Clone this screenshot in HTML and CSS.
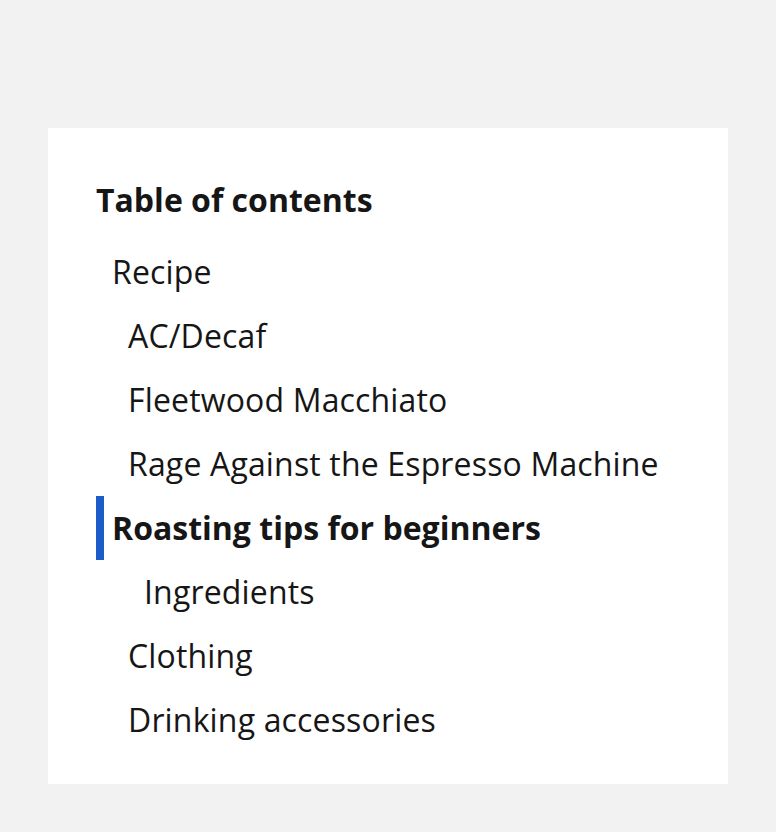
FILE: index.html
```html
<!DOCTYPE html>
<html lang="en">
<head>
<meta charset="utf-8">
<title>Table of contents</title>
<link rel="stylesheet" href="styles.css">
</head>
<body>
<main class="page">
  <nav class="toc">
    <h2 class="toc-title">Table of contents</h2>
    <ul class="toc-list">
      <li class="toc-item lvl1">Recipe</li>
      <li class="toc-item lvl2">AC/Decaf</li>
      <li class="toc-item lvl2">Fleetwood Macchiato</li>
      <li class="toc-item lvl2">Rage Against the Espresso Machine</li>
      <li class="toc-item lvl1 active">Roasting tips for beginners</li>
      <li class="toc-item lvl3">Ingredients</li>
      <li class="toc-item lvl2">Clothing</li>
      <li class="toc-item lvl2">Drinking accessories</li>
    </ul>
  </nav>
</main>
</body>
</html>
```
FILE: styles.css
```css
html, body {
  margin: 0;
  padding: 0;
  background: #f2f2f2;
}
body {
  font-family: "Open Sans", "Noto Sans", sans-serif;
  color: #161616;
}
.page {
  padding: 128px 48px 48px 48px;
}
.toc {
  background: #ffffff;
  padding: 48px 48px 32px 48px;
  height: 656px;
  box-sizing: border-box;
}
.toc-title {
  margin: 0 0 16px 0;
  font-size: 32px;
  line-height: 48px;
  font-weight: 700;
}
.toc-list {
  list-style: none;
  margin: 0;
  padding: 0;
}
.toc-item {
  height: 64px;
  line-height: 64px;
  font-size: 32px;
  letter-spacing: 0.16px;
  white-space: nowrap;
  border-left: 8px solid transparent;
  box-sizing: border-box;
}
.lvl1 { padding-left: 8px; }
.lvl2 { padding-left: 24px; }
.lvl3 { padding-left: 40px; }
.active {
  font-weight: 700;
  letter-spacing: 0;
  border-left-color: #1b5cc8;
}
```
